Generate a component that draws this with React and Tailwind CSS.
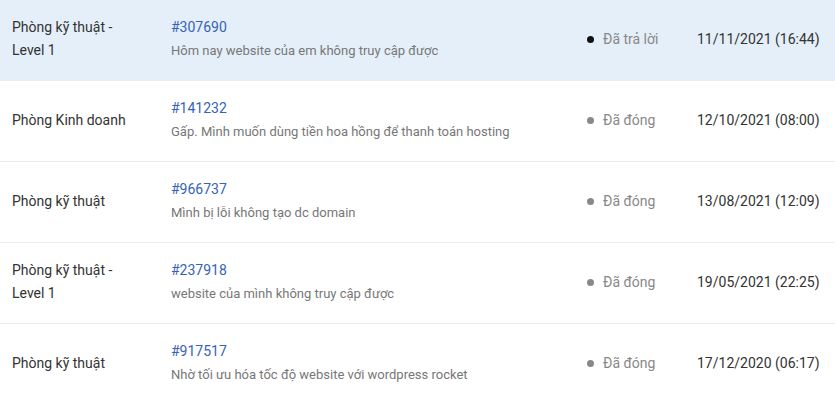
const tickets = [
  {
    dept: ['Phòng kỹ thuật -', 'Level 1'],
    id: '#307690',
    subject: 'Hôm nay website của em không truy cập được',
    status: 'Đã trả lời',
    answered: true,
    date: '11/11/2021 (16:44)',
  },
  {
    dept: ['Phòng Kinh doanh'],
    id: '#141232',
    subject: 'Gấp. Mình muốn dùng tiền hoa hồng để thanh toán hosting',
    status: 'Đã đóng',
    date: '12/10/2021 (08:00)',
  },
  {
    dept: ['Phòng kỹ thuật'],
    id: '#966737',
    subject: 'Mình bị lỗi không tạo dc domain',
    status: 'Đã đóng',
    date: '13/08/2021 (12:09)',
  },
  {
    dept: ['Phòng kỹ thuật -', 'Level 1'],
    id: '#237918',
    subject: 'website của mình không truy cập được',
    status: 'Đã đóng',
    date: '19/05/2021 (22:25)',
  },
  {
    dept: ['Phòng kỹ thuật'],
    id: '#917517',
    subject: 'Nhờ tối ưu hóa tốc độ website với wordpress rocket',
    status: 'Đã đóng',
    date: '17/12/2020 (06:17)',
  },
];

const App = () => {
  return (
    <div className="w-[835px] h-[404px] overflow-hidden bg-white font-['Roboto',sans-serif]">
      {tickets.map((t) => (
        <div
          key={t.id}
          className={`flex items-center h-[81px] pb-[2px] border-b border-[#ececec] ${
            t.answered ? 'bg-[#e4eff9]' : 'bg-white'
          }`}
        >
          {/* Phòng ban */}
          <div className="w-[171px] pl-3 text-[14px] leading-[23px] text-[#333]">
            {t.dept.map((line) => (
              <div key={line}>{line}</div>
            ))}
          </div>

          {/* Ticket */}
          <div className="flex-1">
            <div className="text-[14px] leading-[23px] text-[#3563b8]">{t.id}</div>
            <div className="text-[13px] leading-[23px] text-[#777]">{t.subject}</div>
          </div>

          {/* Trạng thái */}
          <div className="w-[112px] flex items-center gap-[9px] pl-[2px]">
            <span
              className={`w-[7px] h-[7px] rounded-full ${
                t.answered ? 'bg-[#111]' : 'bg-[#888]'
              }`}
            />
            <span className="text-[14px] text-[#888]">{t.status}</span>
          </div>

          {/* Ngày */}
          <div className="w-[138px] text-[14px] text-[#333]">{t.date}</div>
        </div>
      ))}
    </div>
  );
};

export default App;
